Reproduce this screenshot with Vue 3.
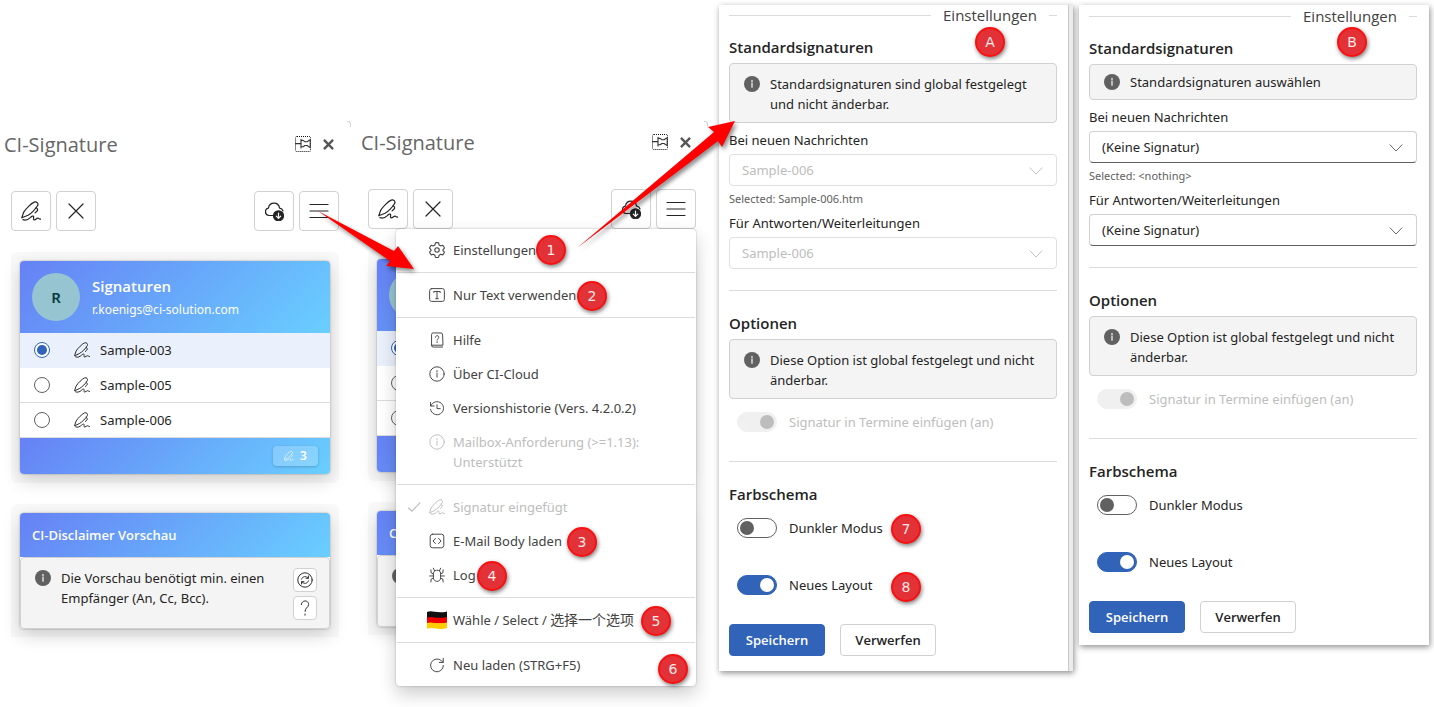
<script setup>
import { h, reactive } from 'vue'

const shapes = {
  pen: '<path d="M.8 16.800 2.600 11.400C4.800 7.600 10.200 2.400 13.200 1.100c2.300-1 4.600 1.300 3.400 3.500-1.700 3.300-6.700 8.200-9.600 9.700z"/><path d="M15.200 6.700c1.500 1 1.900 2.300.9 3.300l-2 1.900"/><path d="M2 18.600c2.700 1.100 5.400-.2 7.300-2 1.500-1.500 3-2.200 3.300-.9.3 1.400-.8 3.100.8 3.100 1.500 0 2.100-1.700 3.600-1.700 1.200 0 1 1.500 2.800 1"/>',
  cross: '<path d="M3 3l14 14M17 3 3 17"/>',
  cloud: '<path d="M9.500 14.500H5a3.700 3.700 0 0 1-.6-7.300C5 3.900 7.300 2.200 10 2.200s5 1.700 5.600 5c1.700.2 3 1.200 3.400 2.800"/><circle cx="14.500" cy="14.800" r="5" fill="currentColor"/><path d="M14.500 12v5.200m-2.200-2 2.200 2.200 2.200-2.200" stroke="#fff"/>',
  menu: '<path d="M1 3.500h18M1 10h18M1 16.500h18"/>',
  gear: '<g transform="translate(-1.2 -1.500) scale(1.120)"><path d="M8.200 2.300Q10 1.700 11.800 2.300L12.300 4.600 14.200 5.700 16.500 5Q17.900 6.400 18.300 8.200L16.700 9.900V11L18.300 12.700Q17.800 14.400 16.500 15.700L14.200 15.100 12.300 16.200 11.800 18.300Q10 18.800 8.200 18.300L7.700 16.200 5.800 15.100 3.500 15.700Q2.200 14.400 1.700 12.700L3.300 11V9.900L1.700 8.200Q2.100 6.400 3.500 5L5.800 5.700 7.700 4.600Z"/><circle cx="10" cy="10.300" r="2.500"/></g>',
  text: '<rect x=".8" y="2" width="18.400" height="16" rx="2.500"/><path d="M6 7V5.600h8V7M10 5.600v9M8.400 14.600h3.200"/>',
  help: '<path d="M17 16.500H3.200V3.200A2 2 0 0 1 5.200 1.200h9.800a2 2 0 0 1 2 2zM3.200 16.500a2 2 0 0 0 2 2.300H17"/><path d="M8 6.600c0-2.700 4.200-2.700 4.200 0 0 1.700-2.100 1.800-2.100 3.600M10.100 12.200v1"/>',
  info: '<circle cx="10" cy="10" r="9"/><path d="M10 9v5M10 5.800v1.300"/>',
  history: '<path d="M2 3v4.500h4.500M2.300 7.300a8.200 8.200 0 1 1-.4 4.500M10 6v4.800h4"/>',
  check: '<path d="m2 11.500 5 4.500L18.500 4" stroke-width="1.700"/>',
  code: '<rect x="1.500" y="1.500" width="17" height="17" rx="3"/><path d="M8 6.800 5 10l3 3.200M12 6.800l3 3.200-3 3.200"/>',
  bug: '<path d="M5.500 8c0-5.400 9-5.400 9 0v5.500c0 6-9 6-9 0zM6.800 4.500 5.500 1.500M13.200 4.500l1.300-3M5.500 8.500 2.800 7.500 2.300 3.500M14.500 8.500l2.700-1 .5-4M5.500 11.200H.8M14.500 11.200h4.700M5.700 14l-2.900 1-.5 3.700M14.300 14l2.900 1 .5 3.700"/>',
  reload: '<path d="M18 10.500A8 8 0 1 1 15.500 4.700L17.600 6.600M17.800 1.700v5.100h-5"/>',
  sync: '<circle cx="10" cy="10" r="9"/><path d="M5.600 9C6.700 5.200 11.800 4.500 14 7.600M14.300 4.900v3h-3M14.400 11c-1.100 3.800-6.200 4.500-8.400 1.400M5.700 15.100v-3h3"/>',
  question: '<path d="M5.500 5.800C5.500-.4 14.500-.4 14.500 5.600c0 3.700-4.500 4-4.500 8.600M10 17.500V19"/>',
  chevron: '<path d="m2.500 6 7.500 7.800L17.500 6"/>',
  pin: '<path d="M0 9.500h7.500M7.500 4v11M7.500 5.500h2.500l2.500 1.700H15L19 4.500v10L15 11.800h-2.500L10 13.500H7.500" stroke-width="1.400"/>',
  close: '<path d="m3 3 14 14M17 3 3 17" stroke-width="3.600" stroke-linecap="butt"/>',
  notice: '<circle cx="10" cy="10" r="10" fill="currentColor" stroke="none"/><path d="M10 9v5M10 5.500v1.600" stroke="#f4f4f4" stroke-width="1.600"/>',
  flag: '<g stroke="none"><path d="M0 2c5-2.500 9 2 20-.6V8H0z" fill="#111"/><path d="M0 7.500c5-2 10 2 20-.5v6.500H0z" fill="#e00"/><path d="M0 13c5-2 10 2 20-.5V18c-8 3-13-1.500-20 .8z" fill="#ffce00"/></g>',
}

const Icon = (props) =>
  h('svg', {
    viewBox: '0 0 20 20', fill: 'none', stroke: 'currentColor',
    'stroke-width': 1.2, 'stroke-linecap': 'round', 'stroke-linejoin': 'round',
    'aria-hidden': 'true', innerHTML: shapes[props.name],
  })
Icon.props = ['name']

const panes = reactive([
  { id: 'start', selected: 'Sample-003' },
  { id: 'open', selected: 'Sample-003' },
])
const samples = ['Sample-003', 'Sample-005', 'Sample-006']

const menu = [
  [{ icon: 'gear', text: 'Einstellungen' }],
  [{ icon: 'text', text: 'Nur Text verwenden' }],
  [
    { icon: 'help', text: 'Hilfe' },
    { icon: 'info', text: 'Über CI-Cloud' },
    { icon: 'history', text: 'Versionshistorie (Vers. 4.2.0.2)' },
    { icon: 'info', text: 'Mailbox-Anforderung (>=1.13): Unterstützt', disabled: true },
  ],
  [
    { icon: 'pen', text: 'Signatur eingefügt', disabled: true, checked: true },
    { icon: 'code', text: 'E-Mail Body laden' },
    { icon: 'bug', text: 'Log' },
  ],
  [{ icon: 'flag', text: 'Wähle / Select / ', chinese: '选择一个选项' }],
  [{ icon: 'reload', text: 'Neu laden (STRG+F5)' }],
]

const settings = reactive([
  {
    id: 'a', note: 'Standardsignaturen sind global festgelegt und nicht änderbar.',
    locked: true, value: 'Sample-006', hint: 'Selected: Sample-006.htm', dark: false, layout: true,
  },
  {
    id: 'b', note: 'Standardsignaturen auswählen',
    locked: false, value: '(Keine Signatur)', hint: 'Selected: <nothing>', dark: false, layout: true,
  },
])

const canvasWidth = 1434
const pins = [
  { label: '1', x: 551, y: 250 }, { label: '2', x: 592, y: 296 },
  { label: '3', x: 582, y: 542 }, { label: '4', x: 492, y: 576 },
  { label: '5', x: 656, y: 621 }, { label: '6', x: 673, y: 669 },
  { label: '7', x: 906, y: 529 }, { label: '8', x: 906, y: 587 },
  { label: 'A', x: 990, y: 42 }, { label: 'B', x: 1352, y: 42 },
]
const pinStyle = (p) => ({ left: (p.x / canvasWidth) * 100 + '%', top: p.y + 'px' })
</script>

<template>
  <main class="board">
    <section v-for="pane in panes" :key="pane.id" class="pane" :class="pane.id">
      <header class="pane-head">
        <h1>CI-Signature</h1>
        <button class="plain pin-btn" aria-label="Anheften"><Icon name="pin" /></button>
        <button class="plain" aria-label="Schließen"><Icon name="close" class="close" /></button>
      </header>
      <div class="toolbar">
        <button class="tool" aria-label="Signatur einfügen"><Icon name="pen" /></button>
        <button class="tool" aria-label="Entfernen"><Icon name="cross" /></button>
        <span class="spacer"></span>
        <button class="tool" aria-label="Herunterladen"><Icon name="cloud" /></button>
        <button class="tool" aria-label="Menü"><Icon name="menu" /></button>
      </div>

      <div class="halo">
        <article class="card">
          <header class="card-head">
            <span class="avatar">R</span>
            <div class="owner">
              <h2>Signaturen</h2>
              <p>r.koenigs@ci-solution.com</p>
            </div>
          </header>
          <label v-for="s in samples" :key="s" class="sample" :class="{ active: pane.selected === s }">
            <input v-model="pane.selected" type="radio" :name="'sig-' + pane.id" :value="s" />
            <Icon name="pen" />
            <span>{{ s }}</span>
          </label>
          <footer class="card-foot">
            <span class="count"><Icon name="pen" />3</span>
          </footer>
        </article>
      </div>

      <div class="halo second">
        <article class="card">
          <header class="preview-head"><h2>CI-Disclaimer Vorschau</h2></header>
          <div class="preview-body">
            <Icon name="notice" />
            <p>Die Vorschau benötigt min. einen Empfänger (An, Cc, Bcc).</p>
            <div class="mini-tools">
              <button class="mini" aria-label="Aktualisieren"><Icon name="sync" /></button>
              <button class="mini" aria-label="Hilfe"><Icon name="question" /></button>
            </div>
          </div>
        </article>
      </div>

      <nav v-if="pane.id === 'open'" class="menu" aria-label="Menü">
        <div v-for="(group, g) in menu" :key="g" class="group">
          <button v-for="item in group" :key="item.text" class="item" :disabled="item.disabled">
            <span class="tick"><Icon v-if="item.checked" name="check" /></span>
            <Icon :name="item.icon" :class="item.icon" />
            <span class="item-text">{{ item.text }}<span v-if="item.chinese" class="chinese" lang="zh">{{ item.chinese }}</span></span>
          </button>
        </div>
      </nav>
    </section>

    <section v-for="s in settings" :key="s.id" class="sheet-col">
      <form class="sheet" :class="s.id" @submit.prevent>
        <div class="sheet-title"><span>Einstellungen</span></div>

        <h3>Standardsignaturen</h3>
        <div class="note" :class="{ compact: !s.locked }"><Icon name="notice" /><p>{{ s.note }}</p></div>
        <label class="field" :for="'new-' + s.id">Bei neuen Nachrichten</label>
        <div class="drop">
          <select :id="'new-' + s.id" :disabled="s.locked"><option>{{ s.value }}</option></select>
          <Icon name="chevron" />
        </div>
        <p class="hint">{{ s.hint }}</p>
        <label class="field reply" :for="'reply-' + s.id">Für Antworten/Weiterleitungen</label>
        <div class="drop">
          <select :id="'reply-' + s.id" :disabled="s.locked"><option>{{ s.value }}</option></select>
          <Icon name="chevron" />
        </div>
        <hr />

        <h3>Optionen</h3>
        <div class="note"><Icon name="notice" /><p>Diese Option ist global festgelegt und nicht änderbar.</p></div>
        <label class="switch off"><input type="checkbox" checked disabled />Signatur in Termine einfügen (an)</label>
        <hr class="second-rule" />

        <h3>Farbschema</h3>
        <label class="switch"><input v-model="s.dark" type="checkbox" />Dunkler Modus</label>
        <label class="switch layout"><input v-model="s.layout" type="checkbox" />Neues Layout</label>

        <div class="actions">
          <button class="btn primary" type="submit">Speichern</button>
          <button class="btn" type="reset">Verwerfen</button>
        </div>
      </form>
    </section>

    <div class="notes">
      <svg class="arrows" viewBox="0 0 1434 707" preserveAspectRatio="none" aria-hidden="true">
        <path d="M318 211 394 251 398 246 414 269 386 266 390 261Z" />
        <path d="M577 248 714 132 708 127 735 121 722 147 718 141Z" />
      </svg>
      <span v-for="p in pins" :key="p.label" class="pin" :style="pinStyle(p)">{{ p.label }}</span>
    </div>
  </main>
</template>

<style>
body { margin: 0; background: #fff; }
</style>

<style scoped>
.board {
  position: relative;
  display: grid;
  grid-template-columns: 357fr 357fr 360fr 360fr;
  align-items: start;
  min-height: 100vh;
  overflow: hidden;
  font: 13px/20px "Noto Sans", "Noto Sans CJK SC", sans-serif;
  color: #242424;
}
.board * { box-sizing: border-box; }
h1, h2, h3, p { margin: 0; }
h1, h2, h3, .sheet-title, .btn { font-family: "Open Sans", sans-serif; }
button { font: inherit; color: inherit; padding: 0; cursor: pointer; }
svg { flex: none; }

.pane { position: relative; padding: 129px 18px 0 11px; }
.pane.open { padding-top: 127px; }
.pane::after {
  content: ""; position: absolute; right: 6px; top: 121px; width: 3px; height: 5px;
  border: solid #d4d4d4; border-width: 1px 1px 0 0; border-radius: 0 3px 0 0;
}
.pane-head { display: flex; align-items: center; height: 30px; margin: 0 3px 0 -7px; }
.pane-head h1 { flex: 1; font-size: 20px; font-weight: 400; line-height: 28px; padding-top: 2px; color: #666; }
.plain { display: flex; align-items: center; justify-content: center; width: 16px; height: 16px; margin-left: 9px; border: 0; background: none; color: #555; }
.pin-btn { border: 1px dotted #111; border-radius: 2px; color: #333; }
.pin-btn svg { width: 16px; height: 16px; }
.close { width: 13px; height: 13px; }
.toolbar { display: flex; gap: 5px; margin-top: 32px; }
.spacer { flex: 1; }
.tool { display: grid; place-items: center; width: 40px; height: 40px; border: 1px solid #d1d1d1; border-radius: 4px; background: #fff; }
.tool svg { width: 20px; height: 20px; }

.halo { margin-top: 21px; padding: 9px; border-radius: 6px; background: rgba(0, 0, 0, .025); }
.halo.second { padding-bottom: 8px; border-radius: 6px 6px 0 0; }
.card { border-radius: 4px; box-shadow: 0 0 2px rgba(0, 0, 0, .35), 0 6px 18px rgba(0, 0, 0, .18); overflow: hidden; background: #fff; }
.card-head, .card-foot, .preview-head { background: linear-gradient(135deg, #6681f5, #69cfff); color: #fff; }
.card-head { display: flex; align-items: center; gap: 12px; height: 72px; padding: 0 12px; }
.owner { padding-top: 2px; }
.card-head h2 { font-size: 15px; line-height: 24px; font-weight: 600; }
.card-head p { font-size: 12px; line-height: 24px; }
.avatar { display: grid; place-items: center; width: 48px; height: 48px; border-radius: 50%; background: #96c5d1; color: #0c3a40; font-size: 15px; font-weight: 600; }
.sample { display: flex; align-items: center; height: 35px; padding: 0 14px; border-bottom: 1px solid #dcdcdc; }
.sample.active { background: #ebf1fc; border-color: #ebf1fc; }
.sample input { appearance: none; display: grid; place-items: center; width: 16px; height: 16px; margin: 0; border: 1px solid #616161; border-radius: 50%; background: #fff; }
.sample input:checked { border-color: #3163b8; }
.sample input:checked::before { content: ""; width: 10px; height: 10px; border-radius: 50%; background: #3163b8; }
.sample svg { width: 16px; height: 16px; margin: 0 10px 0 24px; }
.card-foot { display: flex; align-items: center; justify-content: flex-end; height: 36px; padding: 0 12px; }
.count { display: flex; align-items: center; justify-content: center; gap: 6px; width: 45px; height: 20px; border-radius: 4px; background: rgba(255, 255, 255, .2); box-shadow: 0 1px 3px rgba(0, 0, 0, .2); font-size: 12px; font-weight: 600; }
.count svg { width: 10px; height: 10px; }
.preview-head { display: flex; align-items: center; height: 44px; padding: 0 12px; }
.preview-head h2 { font-size: 13px; line-height: 20px; font-weight: 600; }
.preview-body { display: flex; gap: 10px; height: 72px; padding: 10px 12px 8px 14px; border: 1px solid #d1d1d1; border-radius: 4px; background: #f4f4f4; }
.preview-body > svg, .note svg { width: 16px; height: 16px; margin-top: 2px; color: #616161; }
.preview-body p { flex: 1; }
.mini-tools { display: flex; flex-direction: column; gap: 4px; }
.mini { display: grid; place-items: center; width: 24px; height: 24px; border: 1px solid #d1d1d1; border-radius: 4px; background: #fff; }
.mini svg { width: 16px; height: 16px; }

.menu { position: absolute; z-index: 2; left: 39px; top: 229px; width: 300px; padding: 4px 1px; border-radius: 4px; background: #fff; box-shadow: 0 0 2px rgba(0, 0, 0, .3), 0 8px 18px rgba(0, 0, 0, .2); color: #424242; }
.group + .group { margin-top: 5px; padding-top: 5px; border-top: 1px solid #dcdcdc; }
.item { display: flex; align-items: flex-start; width: 100%; padding: 7px 40px 7px 10px; border: 0; background: none; text-align: left; }
.item:disabled { color: #bdbdbd; }
.tick { flex: none; width: 16px; height: 20px; margin-right: 6px; }
.item svg { width: 16px; height: 16px; margin: 2px 0; }
.item .flag { width: 20px; height: 20px; margin: 0 -2px; }
.tick svg { width: 14px; }
.item-text { margin-left: 8px; white-space: pre-wrap; }
.chinese { font-family: "Noto Sans CJK SC", sans-serif; font-size: 14px; line-height: 16px; }

.sheet-col { padding: 5px 5px 0; }
.sheet { padding: 0 12px 15px 10px; background: #fff; box-shadow: 1px 2px 6px rgba(0, 0, 0, .45); }
.sheet.a { margin-right: -4px; padding-right: 12px; border-right: 4px solid #ececec; box-shadow: inset -1px 0 #c8c8c8, 1px 2px 6px rgba(0, 0, 0, .45); }
.sheet.b { padding-top: 1px; padding-bottom: 12px; }
.sheet-title { display: flex; align-items: center; gap: 12px; height: 20px; margin-bottom: 11px; font-size: 15px; line-height: 20px; color: #424242; }
.sheet-title::before, .sheet-title::after { content: ""; height: 1px; background: #dcdcdc; }
.sheet-title::before { flex: 1; }
.sheet-title::after { width: 8px; }
h3 { margin-bottom: 5px; font-size: 15px; line-height: 22px; font-weight: 600; }
.note { display: flex; gap: 10px; margin-bottom: 7px; padding: 10px 12px 8px 14px; border: 1px solid #d1d1d1; border-radius: 4px; background: #f4f4f4; }
.note.compact { padding-top: 7px; padding-bottom: 7px; }
.field { display: block; margin-bottom: 4px; }
.field.reply { margin-top: 6px; }
.drop { position: relative; }
.drop select { appearance: none; display: block; width: 100%; height: 32px; padding: 0 30px 0 12px; border: 1px solid #d1d1d1; border-bottom-color: #616161; border-radius: 4px; background: #fff; font: inherit; color: inherit; }
.drop select:disabled { border-color: #e0e0e0; color: #bdbdbd; opacity: 1; }
.drop svg { position: absolute; right: 13px; top: 9px; width: 16px; height: 16px; color: #616161; pointer-events: none; }
.drop select:disabled + svg { color: #bdbdbd; }
.hint { margin-top: 5px; font-size: 11px; line-height: 16px; color: #616161; }
hr { height: 1px; border: 0; margin: 21px 0; background: #dcdcdc; }
.second-rule { margin-top: 29px; }
.switch { display: flex; align-items: center; gap: 12px; margin: 13px 0 0 8px; height: 20px; }
.switch input { appearance: none; display: flex; align-items: center; width: 40px; height: 20px; margin: 0; padding: 0 2px; border: 1px solid #616161; border-radius: 10px; background: #fff; }
.switch input::before { content: ""; width: 14px; height: 14px; border-radius: 50%; background: #616161; }
.switch input:checked { justify-content: flex-end; border-color: #3163b8; background: #3163b8; }
.switch input:checked::before { background: #fff; }
.switch.off { color: #bdbdbd; }
.switch.off input { border-color: #f0f0f0; background: #f0f0f0; }
.switch.off input::before { background: #bdbdbd; }
.switch.layout { margin-top: 37px; }
.actions { display: flex; gap: 15px; margin-top: 29px; }
.btn { width: 96px; height: 32px; border: 1px solid #d1d1d1; border-radius: 4px; background: #fff; font-weight: 600; }
.btn.primary { border-color: #3163b8; background: #3163b8; color: #fff; }

.notes { position: absolute; inset: 0; z-index: 3; pointer-events: none; }
.arrows { display: block; width: 100%; height: 707px; fill: #f00; filter: drop-shadow(2px 3px 2px rgba(0, 0, 0, .45)); }
.pin { position: absolute; display: grid; place-items: center; width: 30px; height: 30px; margin: -15px 0 0 -15px; border: 2px solid #fb1010; border-radius: 50%; background: #e23237; box-shadow: 1px 2px 4px rgba(0, 0, 0, .5); color: #ffe9e9; font: 14px/20px "DejaVu Sans", sans-serif; }
</style>
